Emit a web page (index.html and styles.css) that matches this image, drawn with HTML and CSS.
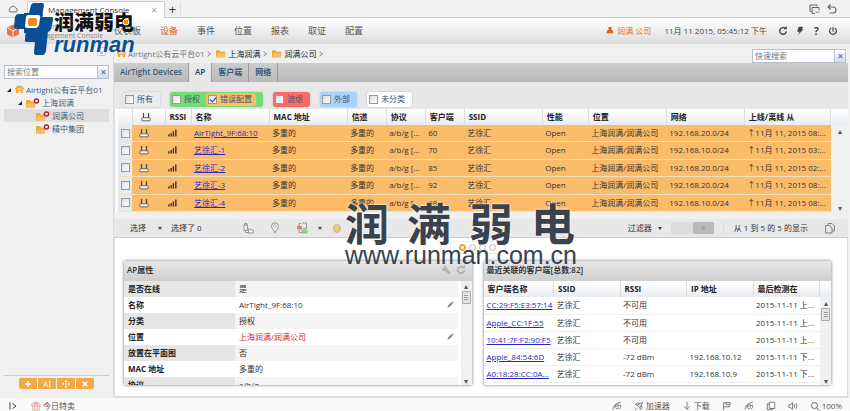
FILE: index.html
```html
<!DOCTYPE html>
<html lang="zh-CN">
<head>
  <meta charset="UTF-8">
  <title>Management Console</title>
  <link rel="stylesheet" href="styles.css">
</head>
<body>
  <svg class="sprites" aria-hidden="true">
    <symbol id="i-cloud" viewBox="0 0 12 10"><path d="M3.5 8.5a2.3 2.3 0 0 1-.4-4.5 3 3 0 0 1 5.8-.3 2.4 2.4 0 0 1-.4 4.8z" fill="none" stroke="#555" stroke-width="1"/></symbol>
    <symbol id="i-windows" viewBox="0 0 12 12"><path d="M3.5 8.500H2V2h7v1.500M4 4.500h7v3M4 4.500V10.500h3M8 8.500l1.500 1.500L11 8.500" fill="none" stroke="#666"/></symbol>
    <symbol id="i-undo" viewBox="0 0 12 12"><path d="M4.500 1.500L2 4l2.500 2.500M2 4h5a3 3 0 0 1 0 6H3.500" fill="none" stroke="#666" stroke-width="1.200"/></symbol>
    <symbol id="i-user" viewBox="0 0 10 10"><path d="M5 .8a2.200 2.200 0 0 1 1.300 4c2 .3 2.900 1.600 2.900 4.200H.8c0-2.600.9-3.900 2.900-4.200A2.200 2.200 0 0 1 5 .8z" fill="#e0640f"/></symbol>
    <symbol id="i-refresh" viewBox="0 0 12 12"><path d="M9 3.200A4 4 0 1 0 10 6.500" fill="none" stroke="currentColor" stroke-width="1.700"/><path d="M6.500 3.800h4V0z" fill="currentColor"/></symbol>
    <symbol id="i-bolt" viewBox="0 0 12 12"><path d="M4.500 1h5.500L8.200 4h2L3 11.500 5.500 7H2.500z" fill="#444"/></symbol>
    <symbol id="i-power" viewBox="0 0 12 12"><path d="M3.800 2.500a4.100 4.100 0 1 0 4.400 0M6 1.500v5" fill="none" stroke="#444" stroke-width="1.500"/></symbol>
    <symbol id="i-home" viewBox="0 0 10 10"><path d="M0 5a5 4.500 0 0 1 10 0H9v4H6.300V6.500H3.700V9H1V5z" fill="#f0a841"/><path d="M2.500 4.500h5" stroke="#fff" stroke-width=".8"/></symbol>
    <symbol id="i-folder" viewBox="0 0 11 9"><path d="M0 1h4l1 1.500h5V8.500H0z" fill="#f0a841"/><path d="M1.500 4h9.500L9.500 8.500H0z" fill="#f8bd62"/></symbol>
    <symbol id="i-folder-off" viewBox="0 0 14 10"><path d="M0 2h4l1 1.500h4V9.500H0z" fill="#f0a841"/><path d="M1.500 5.500h8L8.500 9.500H0z" fill="#f8bd62"/><circle cx="10.500" cy="3" r="2" fill="#fff" stroke="#b01b2e" stroke-width="1.500"/></symbol>
    <symbol id="i-ap" viewBox="0 0 10 10"><path d="M2.500 1v5M7.500 1v5" stroke="#444" stroke-width="1.200"/><rect x=".8" y="5.800" width="8.400" height="3" rx=".5" fill="#fff" stroke="#555" stroke-width=".9"/></symbol>
    <symbol id="i-signal" viewBox="0 0 10 8"><path d="M1 8V5.500M3.500 8V4M6 8V2M8.700 8V0" stroke="#3b2b33" stroke-width="1.500"/></symbol>
    <symbol id="i-copy" viewBox="0 0 12 12"><path d="M4 3V1.500h4L10.500 4v5H8M1.500 3.500h4L8 6v5H1.500z" fill="none" stroke="#777" stroke-width=".9"/></symbol>
    <symbol id="i-move" viewBox="0 0 12 12"><path d="M2 3h3.500v5.500H2zM2.800 3V1.500h2V3M3.500 8.500v2h3M6.500 7h2l.8 1h2v3H6.500z" fill="#f4f4f4" stroke="#888" stroke-width=".9"/></symbol>
    <symbol id="i-pin" viewBox="0 0 10 12"><path d="M5 11C4 8 1.500 6.500 1.500 4.300a3.500 3.500 0 0 1 7 0C8.500 6.500 6 8 5 11z" fill="#f4f4f4" stroke="#888" stroke-width=".9"/><circle cx="5" cy="4.300" r="1.200" fill="none" stroke="#999" stroke-width=".7"/></symbol>
    <symbol id="i-class" viewBox="0 0 12 12"><rect x="1" y="4" width="5" height="3.500" fill="#d98378"/><path d="M6 1h4.500v5.500H7M3 4V1.500h2M3 8v2.500h3" fill="none" stroke="#999"/><rect x="6" y="8" width="5" height="3" fill="#9ad29a" stroke="#7a7" stroke-width=".6"/></symbol>
    <symbol id="i-wrench" viewBox="0 0 12 12"><path d="M3 1.800a3 3 0 0 1 4 3.500l4 3.700-1.700 1.700-4-3.900A3 3 0 0 1 1.500 3.500l2 1.300 1.200-1.200z" fill="#b5b5b5" stroke="#999" stroke-width=".5"/></symbol>
    <symbol id="i-pencil" viewBox="0 0 8 8"><path d="M.5 7.500L1.200 5 4.800 1.400 6.600 3.200 3 6.800zM5.200 1l.9-.7L7.800 2l-.8.800z" fill="#8b8b8b"/></symbol>
    <symbol id="i-gift" viewBox="0 0 12 12"><path d="M1 3.500h10v2.500H1zM2 6v5h8V6M4.500 3.500V11M7.500 3.500V11M6 3.500C3 3.500 3 .8 4.500 1S6 3.500 6 3.500 6 1.200 7.500 1 9 3.500 6 3.500" fill="none" stroke="#ee9a80" stroke-width=".9"/></symbol>
    <symbol id="i-panel" viewBox="0 0 10 10"><path d="M2 1.500v7M4.500 2.500L8 5 4.500 7.500" fill="none" stroke="#444"/></symbol>
    <symbol id="i-e" viewBox="0 0 12 12"><path d="M3.500 6h5.200a2.700 2.700 0 1 0-.6 2M1.500 10.500C0 8 5 2 10.500 1.500M8.500 10c1.500-1 2.500-3 1.800-5.500" fill="none" stroke="#666"/></symbol>
    <symbol id="i-rocket" viewBox="0 0 12 12"><path d="M10.500 1.500L4 5l3 3zM4 5L1.500 4.500 4 2.500l3 .8M7 8l.5 2.500 2-2.500-.5-3M1 11l3-3" fill="none" stroke="#666"/></symbol>
    <symbol id="i-down" viewBox="0 0 10 12"><path d="M5 1v9M1.500 6.500L5 10l3.500-3.500" fill="none" stroke="#666"/></symbol>
    <symbol id="i-flag" viewBox="0 0 12 12"><path d="M2 11V2h8L9 7H2M5 2v2.500h4.500" fill="none" stroke="#666"/></symbol>
    <symbol id="i-square" viewBox="0 0 12 12"><path d="M4 1.500h6.500V9H4zM4 3.500H1.500v7H8V9" fill="none" stroke="#666"/></symbol>
    <symbol id="i-sound" viewBox="0 0 12 12"><path d="M1 4.500h1.500L5.500 2v8L2.500 7.500H1zM7.500 4q1.500 2 0 4M9.500 2.500q2.500 3.500 0 7" fill="none" stroke="#666"/></symbol>
    <symbol id="i-zoom" viewBox="0 0 10 10"><circle cx="4.500" cy="4.500" r="3" fill="none" stroke="#666"/><path d="M6.800 6.800L9.500 9.500" stroke="#666"/></symbol>
  </svg>

  <header class="browser-bar">
    <svg class="icon cloud"><use href="#i-cloud"/></svg>
    <div class="browser-tab"><span>Management Console</span><button aria-label="关闭">×</button></div>
    <button class="new-tab" aria-label="新标签">+</button>
    <div class="browser-tools">
      <svg class="icon"><use href="#i-windows"/></svg>
      <svg class="icon"><use href="#i-undo"/></svg>
    </div>
  </header>

  <div class="app-header">
    <div class="product">
      <svg class="product-mark" viewBox="0 0 12 14"><path d="M6 .5l6 3.200v6.600L6 13.500 0 10.300V3.700z" fill="#ee7040"/><path d="M1 4l5 3 5-3M6 7v6" fill="none" stroke="#fff"/></svg>
      <p>AirTight<br>Management Console</p>
    </div>
    <nav class="main-nav">
      <a href="#">仪表板</a>
      <a href="#" class="current">设备</a>
      <a href="#">事件</a>
      <a href="#">位置</a>
      <a href="#">报表</a>
      <a href="#">取证</a>
      <a href="#">配置</a>
    </nav>
    <div class="session">
      <a href="#" class="user"><svg class="icon-sm"><use href="#i-user"/></svg>润满 公司</a>
      <span class="clock">11月 11 2015, 05:45:12 下午</span>
      <button aria-label="刷新"><svg class="icon-sm"><use href="#i-refresh"/></svg></button>
      <button aria-label="快捷"><svg class="icon-sm"><use href="#i-bolt"/></svg></button>
      <button class="help">?</button>
      <button aria-label="注销"><svg class="icon-sm"><use href="#i-power"/></svg></button>
    </div>
    <div class="brand">
      <svg class="brand-mark" viewBox="0 0 40 53">
        <g fill="#0a4f94">
          <path d="M17 2q1-2 3-2h8q2 0 2 2l-2 12H14z"/>
          <path d="M4 11h12l-2 15H2q-2 0-2-2l1-10q1-3 3-3z"/>
          <path d="M25 14h12q3 0 2 3l-2 9q-1 3-3 3H22z"/>
          <path d="M10 10h19l-3 20H10z"/>
          <path d="M12 25h16l-2 14H13q-3 0-2-3z"/>
          <path d="M22 28h12l-2 20q-1 4-4 4h-6q-2 0-2-3z"/>
        </g>
        <path d="M14 12h10q3 0 2 3l-1 7q-1 3-3 3H13q-2 0-2-2l1-8q0-3 2-3z" fill="#fff"/>
        <rect x="14" y="15" width="9" height="8" rx="2" fill="#ef8a1d"/>
      </svg>
      <div class="brand-text"><strong>润满弱电</strong><em>runman</em></div>
      <svg class="brand-eye" viewBox="0 0 8 8"><circle cx="4" cy="4" r="3" fill="#ef8a1d" stroke="#fff"/></svg>
    </div>
  </div>

  <main class="workspace">
    <aside class="sidebar">
      <button class="collapse" aria-label="收起">«</button>
      <form class="search"><input type="text" placeholder="搜索位置" aria-label="搜索位置"><button type="reset" aria-label="清除">✕</button></form>
      <ul class="tree">
        <li><span class="twist"></span><svg class="home"><use href="#i-home"/></svg><a href="#">Airtight公有云平台01</a></li>
        <li class="level-1"><span class="twist"></span><svg class="folder-off"><use href="#i-folder-off"/></svg><a href="#">上海润满</a></li>
        <li class="level-2 selected"><svg class="folder-off"><use href="#i-folder-off"/></svg><a href="#">润满公司</a></li>
        <li class="level-2"><svg class="folder-off"><use href="#i-folder-off"/></svg><a href="#">精中集团</a></li>
      </ul>
      <div class="tree-actions">
        <button aria-label="添加"><svg viewBox="0 0 10 10"><path d="M5 1.500v7M1.500 5h7" stroke="#fff" stroke-width="2.200"/></svg></button>
        <button aria-label="重命名"><svg viewBox="0 0 10 10"><path d="M.8 8.500L3.300 2l2.500 6.500M1.800 6.500h3M7 1.500h2.500M7 8.500h2.500M8.200 1.500v7" fill="none" stroke="#fff"/></svg></button>
        <button aria-label="移动"><svg viewBox="0 0 10 10"><path d="M5 0l2 2.500H3zM5 10l2-2.500H3zM0 5l2.500-2v4zM10 5L7.500 3v4zM4 4h2v2H4z" fill="#fff"/></svg></button>
        <button aria-label="删除"><svg viewBox="0 0 10 10"><path d="M2 2l6 6M8 2L2 8" stroke="#fff" stroke-width="1.800"/></svg></button>
      </div>
    </aside>

    <section class="content">
      <div class="crumb-row">
        <nav class="crumbs">
          <svg class="home"><use href="#i-home"/></svg><a href="#">Airtight公有云平台01</a><i></i>
          <svg class="folder"><use href="#i-folder"/></svg><a href="#" class="dark">上海润满</a><i></i>
          <svg class="folder"><use href="#i-folder"/></svg><a href="#" class="dark">润满公司</a><i></i>
        </nav>
        <form class="search quick"><input type="text" placeholder="快速搜索" aria-label="快速搜索"><button type="reset" aria-label="清除">✕</button></form>
      </div>

      <div class="tabs">
        <a href="#">AirTight Devices</a>
        <a href="#" class="active">AP</a>
        <a href="#">客户端</a>
        <a href="#">网络</a>
      </div>

      <div class="filters">
        <label class="chip plain"><input type="checkbox">所有</label>
        <div class="chip green">
          <label><input type="checkbox">授权</label>
          <label class="nested"><input type="checkbox" checked>错误配置</label>
        </div>
        <label class="chip red"><input type="checkbox">流氓</label>
        <label class="chip blue"><input type="checkbox">外部</label>
        <label class="chip white"><input type="checkbox">未分类</label>
      </div>

      <div class="device-list">
        <table class="devices">
          <colgroup>
            <col class="w-check"><col class="w-icon"><col class="w-rssi"><col class="w-wide"><col class="w-wide">
            <col class="w-small"><col class="w-small"><col class="w-small"><col class="w-wide"><col class="w-open">
            <col class="w-wide"><col class="w-wide"><col class="w-date">
          </colgroup>
          <thead>
            <tr>
              <th></th><th><svg class="ap"><use href="#i-ap"/></svg></th><th>RSSI</th><th>名称</th><th>MAC 地址</th>
              <th>信道</th><th>协议</th><th>客户端</th><th>SSID</th><th>性能</th><th>位置</th><th>网络</th><th>上线/离线 从</th>
            </tr>
          </thead>
          <tbody id="device-rows"></tbody>
        </table>
        <div class="scroll-col"><span>▴</span><span>▾</span></div>
      </div>

      <div class="toolbar">
        <button>选择</button><span class="caret"></span>
        <span>选择了 0</span>
        <div class="tools">
          <svg class="icon"><use href="#i-move"/></svg>
          <svg class="icon"><use href="#i-pin"/></svg>
          <svg class="icon"><use href="#i-class"/></svg>
          <span class="caret"></span>
          <span class="shield"></span>
        </div>
        <div class="paging">
          <button>过滤器</button><span class="caret"></span>
          <span class="switch"><b>×</b></span>
          <span class="count">从 1 到 5 的 5 的显示</span>
          <svg class="icon"><use href="#i-copy"/></svg>
        </div>
      </div>

      <div class="details">
        <div class="pager"><b></b><span></span><span></span><span></span></div>
        <div class="panels">
          <section class="panel">
            <h2>AP属性<span class="panel-tools"><svg class="icon-sm"><use href="#i-wrench"/></svg><svg class="icon-sm"><use href="#i-refresh"/></svg></span></h2>
            <div class="panel-body">
              <table class="props">
                <tbody>
                  <tr><th>是否在线</th><td>是</td></tr>
                  <tr><th>名称</th><td>AirTight_9F:68:10<svg class="pencil"><use href="#i-pencil"/></svg></td></tr>
                  <tr><th>分类</th><td>授权</td></tr>
                  <tr><th>位置</th><td class="alert">上海润满/润满公司<svg class="pencil"><use href="#i-pencil"/></svg></td></tr>
                  <tr><th>放置在平面图</th><td>否</td></tr>
                  <tr><th>MAC 地址</th><td>多重的</td></tr>
                  <tr><th>协议</th><td>a/b/g</td></tr>
                </tbody>
              </table>
              <div class="scroll-col"><span>▴</span><b></b><span>▾</span></div>
            </div>
          </section>

          <section class="panel">
            <h2>最近关联的客户端[总数:82]</h2>
            <div class="panel-body clients-body">
              <table class="clients">
                <thead>
                  <tr><th class="client-name">客户端名称</th><th>SSID</th><th>RSSI</th><th>IP 地址</th><th>最后检测在</th></tr>
                </thead>
                <tbody id="client-rows"></tbody>
              </table>
              <div class="scroll-col"><span>▴</span><b></b><span>▾</span></div>
            </div>
          </section>
        </div>
        <div class="watermark">
          <div class="watermark-name"><span>润</span><span>满</span><span>弱</span><span>电</span></div>
          <div class="watermark-url">www.runman.com.cn</div>
        </div>
      </div>
    </section>
  </main>

  <footer class="status-bar">
    <svg class="icon-sm"><use href="#i-panel"/></svg>
    <a href="#"><svg class="icon-sm"><use href="#i-gift"/></svg>今日特卖</a>
    <div class="status-tools">
      <svg class="icon-sm"><use href="#i-e"/></svg>
      <a href="#"><svg class="icon-sm"><use href="#i-rocket"/></svg>加速器</a>
      <a href="#"><svg class="icon-sm"><use href="#i-down"/></svg>下载</a>
      <svg class="icon-sm"><use href="#i-flag"/></svg>
      <svg class="icon-sm"><use href="#i-e"/></svg>
      <svg class="icon-sm"><use href="#i-square"/></svg>
      <svg class="icon-sm"><use href="#i-sound"/></svg>
      <a href="#"><svg class="icon-sm"><use href="#i-zoom"/></svg>100%</a>
    </div>
  </footer>

  <script>
    const devices = [
      ['AirTight_9F:68:10', 60, '192.168.20.0/24', '08'],
      ['艺徐汇-1', 70, '192.168.10.0/24', '03'],
      ['艺徐汇-2', 85, '192.168.20.0/24', '02'],
      ['艺徐汇-3', 92, '192.168.20.0/24', '08'],
      ['艺徐汇-4', 68, '192.168.10.0/24', '08']
    ];

    const clients = [
      ['CC:29:F5:E3:57:14', '不可用', '', '上'],
      ['Apple_CC:1F:55', '不可用', '', '上'],
      ['10:41:7F:F2:90:F5', '不可用', '', '上'],
      ['Apple_84:54:6D', '-72 dBm', '192.168.10.12', '下'],
      ['A0:18:28:CC:0A...', '-72 dBm', '192.168.10.9', '下']
    ];

    document.getElementById('device-rows').innerHTML = devices.map(d => `
      <tr>
        <td><input type="checkbox" aria-label="${d[0]}"></td>
        <td><svg class="ap"><use href="#i-ap"/></svg></td>
        <td><svg class="signal"><use href="#i-signal"/></svg></td>
        <td><a href="#">${d[0]}</a></td>
        <td>多重的</td>
        <td>多重的</td>
        <td>a/b/g [...</td>
        <td>${d[1]}</td>
        <td>艺徐汇</td>
        <td>Open</td>
        <td>上海润满/润满公司</td>
        <td>${d[2]}</td>
        <td>↑11月 11, 2015 ${d[3]}:...</td>
      </tr>`).join('');

    document.getElementById('client-rows').innerHTML = clients.map(c => `
      <tr>
        <td><a href="#">${c[0]}</a></td>
        <td>艺徐汇</td>
        <td>${c[1]}</td>
        <td>${c[2]}</td>
        <td>2015-11-11 ${c[3]}...</td>
      </tr>`).join('');
  </script>
</body>
</html>
```
FILE: styles.css
```css
* {
  box-sizing: border-box;
}

body {
  margin: 0;
  min-height: 100vh;
  display: flex;
  flex-direction: column;
  font-family: "Open Sans", "Noto Sans CJK SC", sans-serif;
  font-size: 8px;
  line-height: 12px;
  color: #333;
  background: #f0f0f0;
}

a {
  color: inherit;
  text-decoration: none;
}

button {
  border: none;
  padding: 0;
  background: none;
  font: inherit;
  color: inherit;
  cursor: pointer;
}

input[type="checkbox"] {
  appearance: none;
  display: block;
  flex: none;
  width: 9px;
  height: 9px;
  margin: 0;
  border: 1px solid #999;
  background: linear-gradient(135deg, #ddd, #fff);
  position: relative;
}

input[type="checkbox"]:checked::after {
  content: "";
  position: absolute;
  left: 2px;
  top: 0;
  width: 3px;
  height: 5px;
  border: solid #223a8a;
  border-width: 0 1px 1px 0;
  transform: rotate(40deg);
}

svg {
  display: block;
  flex: none;
}

.sprites {
  position: absolute;
  width: 0;
  height: 0;
}

.icon {
  width: 12px;
  height: 12px;
}

.icon-sm {
  width: 10px;
  height: 10px;
}

.home {
  width: 9px;
  height: 9px;
}

.folder {
  width: 10px;
  height: 9px;
}

.folder-off {
  width: 14px;
  height: 10px;
}

/* browser chrome */
.browser-bar {
  display: flex;
  align-items: center;
  height: 18px;
  padding-left: 8px;
  border-bottom: 1px solid #ccc;
}

.browser-bar .cloud {
  width: 10px;
}

.browser-tab {
  display: flex;
  justify-content: space-between;
  align-items: center;
  align-self: flex-end;
  width: 138px;
  height: 17px;
  margin-left: 9px;
  padding: 0 7px 0 20px;
  border: 1px solid #ccc;
  border-bottom: none;
  border-radius: 2px 2px 0 0;
  background: #fff;
  margin-bottom: -1px;
}

.browser-tab button {
  color: #999;
  font-size: 10px;
}

.new-tab {
  width: 16px;
  border-right: 1px solid #ddd;
  font-size: 13px;
}

.browser-tools {
  display: flex;
  gap: 6px;
  margin-left: auto;
  padding-right: 12px;
}

/* application header */
.app-header {
  position: relative;
  display: flex;
  align-items: center;
  height: 26px;
  padding: 0 12px 0 7px;
  background: linear-gradient(#fff, #dcdcdc);
}

.product {
  display: flex;
  align-items: center;
  gap: 13px;
  width: 107px;
}

.product p {
  margin: 0;
  font-size: 7px;
  line-height: 9px;
  color: #888;
  white-space: nowrap;
}

.product-mark {
  width: 12px;
  height: 14px;
}

.main-nav {
  display: flex;
  gap: 19px;
  font-size: 9px;
  color: #555;
}

.main-nav .current {
  color: #e0621a;
}

.session {
  display: flex;
  align-items: center;
  gap: 7px;
  margin-left: auto;
  color: #444;
}

.user {
  display: flex;
  gap: 3px;
  color: #e0741a;
}

.user svg {
  width: 8px;
}

.clock {
  margin: 0 4px 0 6px;
}

.session .help {
  width: 9px;
  font-size: 10px;
  font-weight: bold;
}

.brand {
  position: absolute;
  left: 14px;
  top: -15px;
  z-index: 2;
  display: flex;
}

.brand-mark {
  width: 40px;
  height: 53px;
}

.brand-text {
  padding-top: 10px;
}

.brand-text strong,
.brand-text em {
  display: block;
}

.brand-text strong {
  font-size: 20px;
  line-height: 20px;
  font-weight: 900;
  color: #111;
  text-shadow: 0 0 2px #fff;
}

.brand-text em {
  font-family: "Liberation Sans", sans-serif;
  font-size: 22px;
  line-height: 24px;
  font-weight: bold;
  color: #0a4f94;
  text-shadow: 0 0 2px #fff;
}

.brand-eye {
  position: absolute;
  right: 5px;
  top: 15px;
  width: 8px;
  height: 8px;
}

/* layout */
.workspace {
  flex: 1;
  display: flex;
}

.sidebar {
  display: flex;
  flex-direction: column;
  width: 114px;
  padding: 3px 4px 9px;
  border-right: 1px solid #ddd;
}

.content {
  flex: 1;
  min-width: 0;
  display: flex;
  flex-direction: column;
  margin-right: 2px;
}

.collapse {
  align-self: flex-end;
  width: 9px;
  height: 9px;
  margin-right: 3px;
  border: 1px solid #a9c6e2;
  border-radius: 2px;
  background: #fff;
  color: #2f79ba;
  line-height: 5px;
}

.search {
  display: flex;
  height: 14px;
  margin-top: 9px;
}

.search input {
  flex: 1;
  min-width: 0;
  padding: 0 2px;
  border: 1px solid #b5bfcc;
  background: #fff;
  font: inherit;
}

.search input::placeholder {
  color: #777;
}

.search button {
  width: 11px;
  border: 1px solid #b5bfcc;
  border-left: none;
  background: linear-gradient(#fff, #d5dbe3);
  color: #2d6ca5;
  line-height: 10px;
}

.tree {
  flex: 1;
  margin: 4px 0 0;
  padding: 0;
  list-style: none;
  color: #355f7f;
}

.tree li {
  display: flex;
  align-items: center;
  gap: 2px;
  height: 13px;
  padding-left: 3px;
  white-space: nowrap;
}

.tree .level-1 {
  padding-left: 14px;
}

.tree .level-2 {
  padding-left: 32px;
}

.tree .selected {
  background: #dedede;
}

.twist {
  margin-right: 2px;
  border: 2px solid;
  border-color: transparent #222 #222 transparent;
}

.tree-actions {
  display: flex;
  justify-content: center;
  gap: 1px;
  padding-top: 2px;
  border-top: 1px solid #ccc;
}

.tree-actions button {
  display: flex;
  align-items: center;
  justify-content: center;
  width: 18px;
  height: 11px;
  background: #f2aa46;
}

.tree-actions button:first-child {
  border-radius: 2px 0 0 2px;
}

.tree-actions button:last-child {
  border-radius: 0 2px 2px 0;
}

.tree-actions svg {
  width: 8px;
  height: 8px;
}

/* breadcrumbs and tabs */
.crumb-row {
  display: flex;
  justify-content: space-between;
  height: 19px;
  padding-left: 3px;
}

.crumbs {
  display: flex;
  align-items: center;
  gap: 2px;
  color: #6c7780;
}

.crumbs .dark {
  color: #222;
}

.crumbs i {
  width: 4px;
  height: 4px;
  margin-right: 4px;
  border: solid #999;
  border-width: 1px 1px 0 0;
  transform: rotate(45deg);
}

.quick {
  width: 94px;
  margin: 5px 2px 0 0;
}

.tabs {
  display: flex;
  height: 19px;
  background: linear-gradient(#cdcdcd, #b9b9b9);
  font-weight: 600;
  color: #33587c;
}

.tabs a {
  padding: 3px 6px;
  border-right: 1px solid #999;
}

.tabs .active {
  background: #e8e8e8;
  color: #223f60;
}

/* class filters */
.filters {
  display: flex;
  align-items: center;
  gap: 10px;
  height: 27px;
  padding: 7px 9px 0;
  background: #e8e8e8;
  color: #3c5277;
}

.chip,
.chip label {
  display: flex;
  align-items: center;
  gap: 3px;
}

.chip {
  height: 15px;
  padding: 0 7px 0 2px;
  border-radius: 3px;
  box-shadow: 0 0 2px #bbb;
}

.plain {
  background: #ececec;
}

.chip.green {
  gap: 6px;
  background: #74dc74;
}

.red {
  background: #fa6b66;
}

.blue {
  background: #a8d2fb;
}

.white {
  background: #fff;
}

.chip .nested {
  height: 13px;
  padding: 0 4px 0 2px;
  border-radius: 3px;
  background: #fabd68;
}

/* tables */
table {
  width: 100%;
  table-layout: fixed;
  border-collapse: collapse;
}

th,
td {
  padding: 0 0 0 4px;
  overflow: hidden;
  text-align: left;
  white-space: nowrap;
}

th {
  color: #222;
}

.device-list {
  display: flex;
  padding-left: 3px;
  background: #fff;
  border-left: 1px solid #ddd;
}

.devices {
  flex: 1;
  width: 0;
  height: 103px;
}

.devices th {
  height: 16px;
}

.devices th,
.clients th {
  border-right: 1px solid #ddd;
  background: linear-gradient(#fff, #e9ecef);
}

.devices td {
  padding-left: 3px;
  border-bottom: 1px solid #f4dfbf;
  background: #fbbc69;
}

.devices td:first-child {
  background: #e6ebf0;
}

.devices td a,
.clients td a {
  color: #2727c9;
  text-decoration: underline;
}

.w-check {
  width: 14px;
}

.w-icon {
  width: 33px;
}

.w-rssi {
  width: 26px;
}

.w-wide {
  width: 78px;
}

.w-small {
  width: 39px;
}

.w-open {
  width: 46px;
}

.w-date {
  width: 86px;
}

.ap {
  width: 10px;
  height: 10px;
  margin-left: 4px;
}

.signal {
  width: 9px;
  height: 8px;
}

.scroll-col {
  display: flex;
  flex-direction: column;
  width: 11px;
  background: #f0f0f0;
  color: #555;
  font-size: 8px;
  line-height: 9px;
  text-align: center;
}

.scroll-col span:last-child {
  margin-top: auto;
}

.scroll-col b {
  height: 13px;
  margin: 1px;
  border: 1px solid #aaa;
  border-radius: 1px;
  background: repeating-linear-gradient(#999 0 1px, #eee 1px 2px) center / 4px 5px no-repeat #e4e4e4;
}

/* the column header runs on over the scroll bar */
.device-list .scroll-col,
.clients-body .scroll-col {
  padding-top: 17px;
  background: linear-gradient(#fff, #e9ecef) top / 100% 16px no-repeat #f0f0f0;
}

.device-list .scroll-col {
  width: 17px;
}

/* toolbar under the device list */
.toolbar {
  display: flex;
  align-items: center;
  height: 19px;
  margin-top: 7px;
  padding: 0 12px 0 16px;
  border-bottom: 1px solid #ccc;
  background: #e8e8e8;
}

.caret {
  margin: 0 9px 0 12px;
  border: 2px solid transparent;
  border-top: 3px solid #444;
  border-bottom: none;
}

.tools,
.paging {
  display: flex;
  align-items: center;
}

.tools {
  gap: 15px;
  margin-left: 40px;
}

.tools .caret {
  margin: 0 -4px 0 -5px;
}

.shield {
  width: 8px;
  height: 9px;
  border: 1px solid #bbb;
  border-radius: 4px;
  background: #f8c070;
}

.paging {
  margin-left: auto;
}

.paging .caret {
  margin: 0 9px 0 6px;
}

.switch {
  display: flex;
  justify-content: flex-end;
  width: 43px;
  height: 12px;
  background: #dcdcdc;
}

.switch b {
  width: 21px;
  border-radius: 2px;
  background: #b9b9b9;
  color: #999;
  text-align: center;
}

.count {
  margin: 0 16px 0 9px;
  padding-left: 10px;
  border-left: 1px solid #cfdde6;
}

/* detail panels */
.details {
  position: relative;
  flex: 1;
  padding: 3px 15px 10px 8px;
  border: 1px solid #ddd;
  border-top: none;
  border-bottom-width: 2px;
  background: #fff;
}

.pager {
  display: flex;
  align-items: center;
  justify-content: center;
  gap: 3px;
  width: 56px;
  height: 13px;
  margin: 0 auto 6px;
  border: 1px solid #eee;
  border-radius: 6px;
}

.pager b,
.pager span {
  width: 7px;
  height: 7px;
  border: 1px solid #bbb;
  border-radius: 50%;
}

.pager b {
  border: 2px solid #f0a53a;
}

.panels {
  display: grid;
  grid-template-columns: 1fr 1fr;
  gap: 10px;
}

.panel {
  min-width: 0;
  border: 1px solid #c9c9c9;
  border-radius: 3px;
  box-shadow: 0 0 3px #bbb;
}

.panel h2 {
  display: flex;
  align-items: center;
  justify-content: space-between;
  height: 20px;
  margin: 0;
  padding: 0 6px 3px 3px;
  background: linear-gradient(#e6e6e6, #cecece);
  font-size: 8px;
  font-weight: 600;
}

.panel-tools {
  display: flex;
  gap: 5px;
  color: #aaa;
}

.panel-body {
  display: flex;
  height: 104px;
  overflow: hidden;
}

.panel-body table {
  flex: 1;
  width: 0;
  align-self: flex-start;
}

.props {
  margin-right: 3px;
}

.props th {
  width: 111px;
}

.props th,
.props td {
  height: 16px;
}

.props tr:nth-child(odd) th {
  background: #e6e6e6;
}

.props tr:nth-child(odd) td {
  background: #f4f4f4;
}

.props .alert {
  color: #cc1f2f;
}

.pencil {
  float: right;
  width: 7px;
  height: 7px;
  margin: 2px 4px 0 0;
}

.clients th {
  height: 16px;
}

.clients .client-name {
  width: 70px;
}

.clients td {
  height: 17px;
  padding-left: 3px;
  border-bottom: 1px solid #eee;
}

/* overlay */
.watermark {
  position: absolute;
  left: 50%;
  top: -37px;
  width: 230px;
  margin-left: -136px;
  color: #39424d;
}

.watermark-name {
  display: flex;
  justify-content: space-between;
  font-family: "Noto Sans CJK SC", sans-serif;
  font-size: 44px;
  font-weight: bold;
  line-height: 42px;
  text-shadow: 0 0 2px #fff, 0 0 2px #fff;
}

.watermark-url {
  font-family: "Liberation Sans", sans-serif;
  font-size: 25px;
  line-height: 24px;
  white-space: nowrap;
}

/* browser status bar */
.status-bar {
  display: flex;
  align-items: center;
  gap: 13px;
  height: 16px;
  padding: 0 8px;
  background: #f9f9f9;
  color: #555;
}

.status-bar a,
.status-tools {
  display: flex;
  align-items: center;
  gap: 2px;
}

.status-tools {
  gap: 12px;
  margin-left: auto;
}
```
